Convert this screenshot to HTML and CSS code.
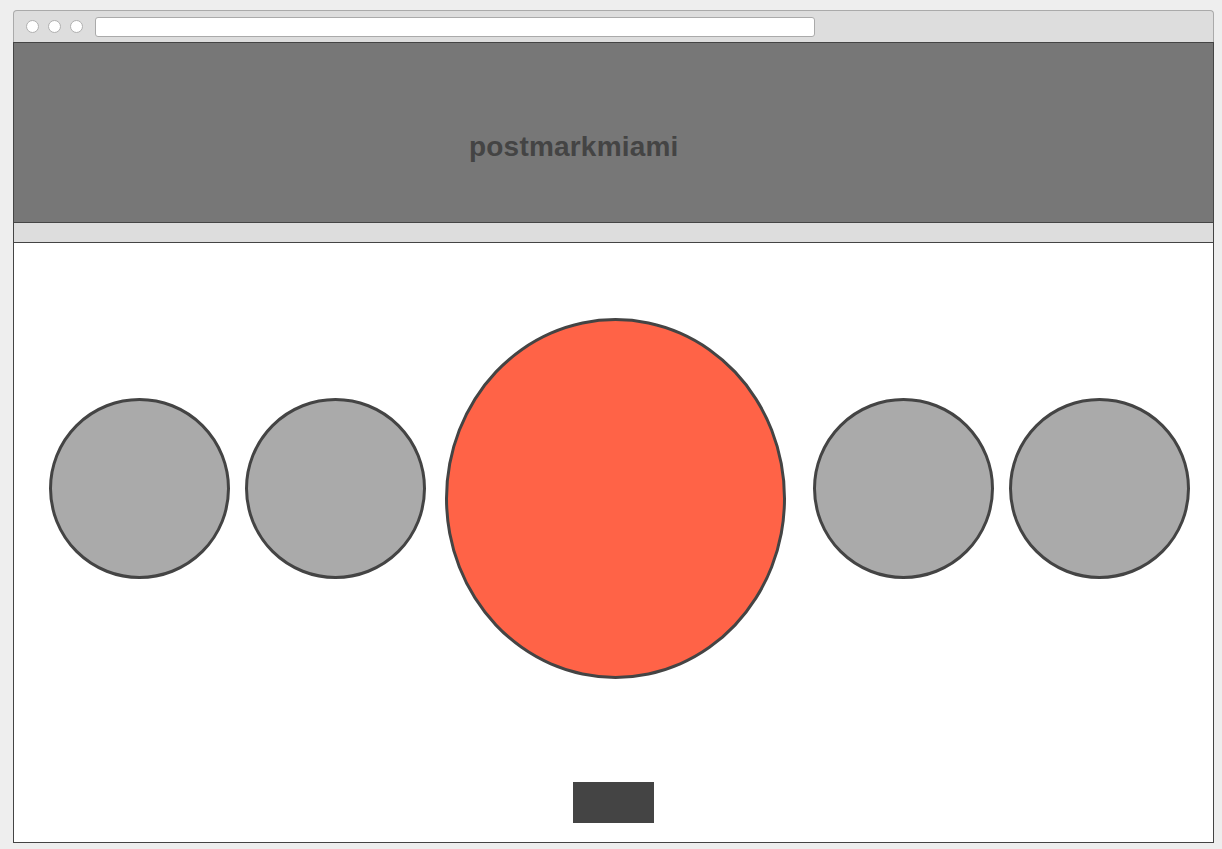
FILE: index.html
```html
<!DOCTYPE html>
<html>
<head>
<meta charset="utf-8">
<title>postmarkmiami</title>
<link rel="stylesheet" href="styles.css">
</head>
<body>
<div class="window">
  <div class="chrome">
    <span class="dot"></span>
    <span class="dot"></span>
    <span class="dot"></span>
    <span class="urlbar"></span>
  </div>
  <div class="frame">
    <div class="header">
      <h1 class="title">postmarkmiami</h1>
    </div>
    <div class="band"></div>
    <div class="content">
      <div class="carousel">
        <div class="circle small c1"></div>
        <div class="circle small c2"></div>
        <div class="circle big"></div>
        <div class="circle small c3"></div>
        <div class="circle small c4"></div>
      </div>
      <div class="actions">
        <div class="button"></div>
      </div>
    </div>
  </div>
</div>
</body>
</html>
```

FILE: styles.css
```css
html, body {
  margin: 0;
  padding: 0;
}
body {
  background: #eeeeee;
  font-family: "Liberation Sans", Arial, sans-serif;
  padding: 10px 0 0 13px;
  height: 849px;
  box-sizing: border-box;
  overflow: hidden;
}
.window {
  width: 1201px;
}
.chrome {
  box-sizing: border-box;
  height: 32px;
  background: #dddddd;
  border: 1px solid #aaaaaa;
  border-bottom: none;
  border-radius: 4px 4px 0 0;
  display: flex;
  align-items: center;
  padding-left: 12px;
}
.dot {
  width: 13px;
  height: 13px;
  box-sizing: border-box;
  border: 1px solid #b0b0b0;
  border-radius: 50%;
  background: #ffffff;
  margin-right: 9px;
  flex: none;
}
.urlbar {
  margin-left: 3px;
  width: 720px;
  height: 20px;
  box-sizing: border-box;
  border: 1px solid #aaaaaa;
  border-radius: 3px;
  background: #ffffff;
  flex: none;
}
.frame {
  border: 1px solid #444444;
}
.header {
  height: 179px;
  background: #777777;
  box-sizing: border-box;
  padding: 88px 0 0 455px;
}
.title {
  margin: 0;
  font-size: 28px;
  line-height: 32px;
  font-weight: bold;
  letter-spacing: 0.2px;
  color: #444444;
}
.band {
  height: 19px;
  background: #dddddd;
  border-top: 1px solid #444444;
  border-bottom: 1px solid #444444;
}
.content {
  height: 599px;
  background: #ffffff;
  box-sizing: border-box;
  padding-top: 75px;
}
.carousel {
  display: flex;
  align-items: flex-start;
  padding-left: 35px;
}
.circle {
  box-sizing: border-box;
  border: 3px solid #444444;
  border-radius: 50%;
  flex: none;
}
.small {
  width: 181px;
  height: 181px;
  background: #aaaaaa;
  margin-top: 80px;
}
.c2 { margin-left: 15px; }
.big {
  width: 341px;
  height: 361px;
  background: #ff6347;
  margin-left: 19px;
}
.c3 { margin-left: 27px; }
.c4 { margin-left: 15px; }
.actions {
  display: flex;
  justify-content: center;
  margin-top: 103px;
}
.button {
  width: 81px;
  height: 41px;
  background: #444444;
}
```
